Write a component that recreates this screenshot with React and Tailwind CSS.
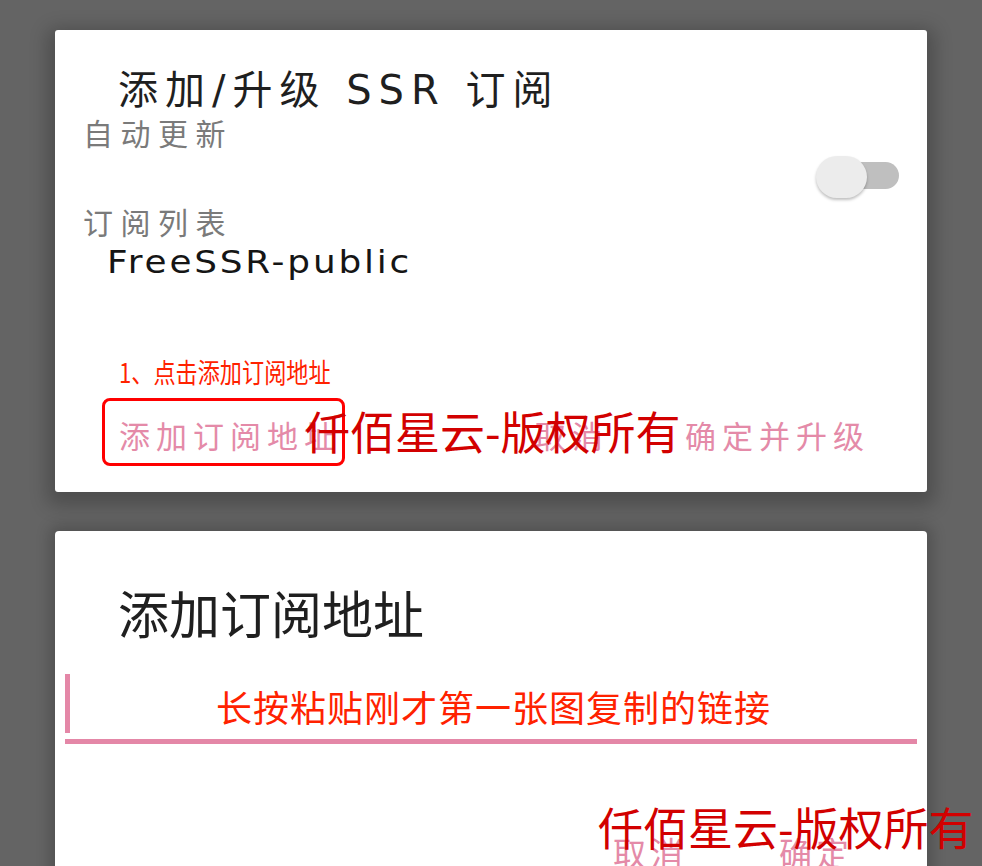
const ui = { fontFamily: '"DejaVu Sans", "Noto Sans CJK SC", sans-serif' };
const cjk = { fontFamily: '"Noto Sans CJK SC", sans-serif' };

const Toggle = () => (
    <div className="relative w-[83px] h-[42px]">
        <div className="absolute right-0 top-[6px] h-[27px] w-[66px] rounded-full bg-[#bfbfbf]" />
        <div className="absolute left-0 top-0 w-[51px] h-[42px] rounded-full bg-[#ececec] shadow-[0_2px_3px_rgba(0,0,0,0.25)]" />
    </div>
);

const Watermark = ({ className }) => (
    <div
        className={`absolute text-[45px] leading-none text-[#d20000] whitespace-nowrap ${className}`}
        style={cjk}
    >
        仟佰星云-版权所有
    </div>
);

export default function App() {
    return (
        <div className="relative h-[866px] w-full overflow-hidden bg-[#646464] pt-[30px] px-[55px]">
            {/* first dialog */}
            <div className="relative bg-white rounded-[3px] h-[462px] flex flex-col shadow-[0_6px_18px_8px_rgba(0,0,0,0.22)]">
                <h1 className="mt-[36px] pl-[63px] text-[40px] leading-[48px] tracking-[7px] text-[#1f1f1f]" style={ui}>
                    添加/升级 SSR 订阅
                </h1>

                <div className="flex justify-between">
                    <p className="pl-[28px] text-[30px] leading-[36px] tracking-[7.5px] text-[#7a7a7a]" style={cjk}>
                        自动更新
                    </p>
                    <div className="mt-[42px] mr-[28px]">
                        <Toggle />
                    </div>
                </div>

                <p className="mt-[5px] pl-[28px] text-[30px] leading-[36px] tracking-[7.5px] text-[#7a7a7a]" style={cjk}>
                    订阅列表
                </p>
                <p className="mt-[3px] pl-[52px]" style={ui}>
                    <span className="inline-block origin-left scale-x-[1.12] text-[32px] leading-[40px] tracking-[2.5px] text-[#151515]">
                        FreeSSR-public
                    </span>
                </p>

                <div className="mt-[135px] flex items-center pl-[64px] pr-[57px] text-[31px] leading-[36px] tracking-[6px] text-[#e48aa8]" style={cjk}>
                    <span>添加订阅地址</span>
                    <span className="ml-auto">取消</span>
                    <span className="ml-[76px]">确定并升级</span>
                </div>
            </div>

            {/* second dialog */}
            <div className="mt-[39px] bg-white rounded-t-[4px] h-[360px] flex flex-col shadow-[0_0_14px_6px_rgba(0,0,0,0.18)]">
                <h2 className="mt-[51px] pl-[63px] text-[51px] leading-[60px] text-[#1f1f1f]" style={cjk}>
                    添加订阅地址
                </h2>

                <div className="mt-[32px] mx-[10px]">
                    <div className="flex h-[59px]">
                        <div className="w-[5px] bg-[#e487a7]" />
                        <p className="flex-1 pt-[12px] text-center text-[36px] leading-[40px] tracking-[1px] text-[#ff2200]" style={cjk}>
                            长按粘贴刚才第一张图复制的链接
                        </p>
                    </div>
                    <div className="mt-[6px] h-[5px] bg-[#e487a7]" />
                </div>

                <div className="mt-[88px] flex justify-end pr-[74px] text-[33px] leading-[40px] tracking-[4px] text-[#e48aa8]" style={cjk}>
                    <span>取消</span>
                    <span className="ml-[92px]">确定</span>
                </div>
            </div>

            {/* annotations over the screenshot */}
            <div
                className="absolute left-[119px] top-[358px] text-[27px] leading-none text-[#ff2200] whitespace-nowrap origin-left scale-x-[0.82]"
                style={cjk}
            >
                1、点击添加订阅地址
            </div>
            <div className="absolute left-[102px] top-[398px] w-[243px] h-[68px] border-[3px] border-[#ff0000] rounded-[8px]" />
            <Watermark className="left-[305px] top-[408px]" />
            <Watermark className="left-[598px] top-[804px]" />
        </div>
    );
}
